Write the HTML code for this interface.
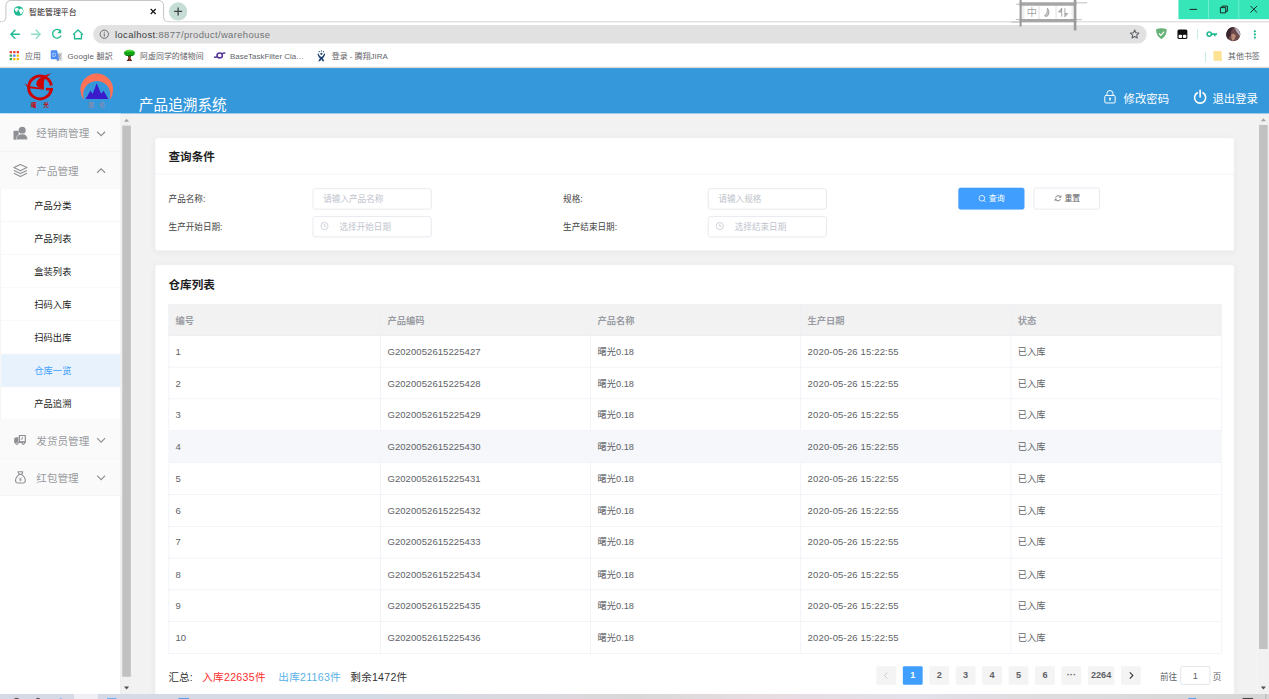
<!DOCTYPE html>
<html lang="zh-CN">
<head>
<meta charset="utf-8">
<title>智能管理平台</title>
<style>
html,body{margin:0;padding:0;width:1269px;height:699px;overflow:hidden;background:#fff}
body{font-family:"Liberation Sans","Noto Sans CJK SC",sans-serif;color:#333}
#root{position:absolute;left:0;top:0;width:1920px;height:1058px;transform:scale(0.6609375);transform-origin:0 0;overflow:hidden;background:#fff}
#root *{box-sizing:border-box}
.abs{position:absolute}
.t{position:absolute;white-space:nowrap;line-height:1}
svg{position:absolute;overflow:visible}
/* chrome */
#tabstrip{left:0;top:0;width:1920px;height:34px;background:#fff}
#toolbar{left:0;top:34px;width:1920px;height:36px;background:#fff}
#bookmarks{left:0;top:70px;width:1920px;height:32px;background:#fff}
.bm{font-size:12px;color:#5f6368;top:79px;height:12px}
/* page */
#header{left:0;top:102.900px;width:1920px;height:69.100px;background:#3598db}
#sidebar{left:0;top:172px;width:183px;height:878px;background:linear-gradient(#f5f5f5,#f5f5f5) 0 0/2px 464px no-repeat #fff;border-right:1px solid #e6e6e6}
#sbscroll{left:183px;top:172px;width:17px;height:878px;background:#f1f1f1}
#main{left:200px;top:172px;width:1703px;height:878px;background:#f2f2f2}
#mscroll{left:1903px;top:172px;width:17px;height:878px;background:#f1f1f1}
#taskbar{left:0;top:1049.600px;width:1920px;height:10px;background:linear-gradient(to right,#d6d9e6 0%,#d5dbe4 30%,#dcd8de 45%,#d9d8d8 50%,#e6dde2 60%,#e3e1ea 72%,#dfdde0 80%,#d6d6d6 100%)}
.card{position:absolute;background:#fff;border-radius:4px;border:1px solid #ebeef5;box-shadow:0 2px 10px 0 rgba(0,0,0,.04)}
.thumb{position:absolute;left:2px;width:13px;background:#c1c1c1}
/* sidebar */
.m1{position:absolute;left:0;width:182px;height:57px;background:#fafafa;border-bottom:1px solid #f0f0f0}
.m1 .t{left:55px;top:20px;font-size:16px;color:#999a9f}
.m2{position:absolute;left:2px;width:180px;height:50px;background:#fff;border-bottom:1px solid #f2f2f2}
.m2 .t{left:50px;top:18px;font-size:14px;color:#1a1a1a}
.m2.on{background:#e8f2fc}
.m2.on .t{color:#409eff}
/* form */
.lbl{font-size:13px;color:#444}
.inp{position:absolute;width:180px;height:32px;border:1px solid #dcdfe6;border-radius:4px;background:#fff}
.inp .t{font-size:13px;color:#c0c4cc;top:9px}
.btn{position:absolute;width:100px;height:33px;border-radius:3px;border:1px solid #dcdfe6;background:#fff}
.td{font-size:14px;color:#606266}
.tn{font-size:14.400px}
/* table */
.th{position:absolute;top:460px;height:48px;background:#f2f2f2;border-right:1px solid #ebeef5;border-bottom:1px solid #ebeef5}
.th .t{left:10px;top:17px;font-size:14px;font-weight:bold;color:#909399}
.tr{position:absolute;left:255px;width:1592px;height:48px;border-bottom:1px solid #ebeef5;border-left:1px solid #ebeef5;background:#fff}
.tr.hv{background:#f5f7fa}
.tr .t{top:17px;font-size:14px;color:#606266}
.tr i{position:absolute;top:0;width:1px;height:48px;background:#ebeef5}
.pg{position:absolute;top:1008.300px;height:28px;width:30px;background:#f4f4f5;border-radius:2px;font-size:13.800px;font-weight:bold;color:#606266;text-align:center;line-height:28px}
.pg.on{background:#409eff;color:#fff}
</style>
</head>
<body>
<div id="root">
<!-- ===== browser chrome ===== -->
<div id="tabstrip" class="abs">
  <svg width="1920" height="34" style="left:0;top:0">
    <path d="M0,33.300 L1920,33.300" stroke="#c4c4c4" stroke-width="1.600" fill="none"/>
    <path d="M0,33.5 Q9,33.5 9,25 L9,9 Q9,0.7 17,0.7 L239,0.7 Q247.5,0.7 247.5,9 L247.5,25 Q247.5,33.5 256,33.5" stroke="#b9b9b9" stroke-width="1.3" fill="#fff"/>
    <path d="M1,34 L255,34" stroke="#fff" stroke-width="2"/>
    <!-- favicon -->
    <circle cx="28.200" cy="16.600" r="7.300" fill="#1fb992"/>
    <path transform="translate(0,-0.900)" d="M24.2,12.6 l3,0.6 l1.6,2.2 l-2.4,1.4 l-0.4,2.6 l-2.4,-1.4 l-1.4,-2.6 z M30,14 l3.6,0.2 l1.4,3 l-1.8,4 l-2.6,1 l-0.6,-3.2 l-1.8,-1.6 l1,-1.8 z" fill="#fff"/>
    <!-- close -->
    <path d="M228,13.6 L235.6,21.2 M235.6,13.6 L228,21.2" stroke="#1a1a1a" stroke-width="1.9" fill="none"/>
    <!-- new tab -->
    <circle cx="269.5" cy="17.3" r="13.8" fill="#c6ddd6"/>
    <path d="M263.5,17.3 L275.5,17.3 M269.5,11.3 L269.5,23.3" stroke="#3c4043" stroke-width="1.9" fill="none"/>
  </svg>
  <div class="t" style="left:44px;top:12px;font-size:12px;color:#1f2023">智能管理平台</div>
  <!-- window buttons -->
  <div class="abs" style="left:1783px;top:0;width:137px;height:28.5px;background:#36e6b9"></div>
  <svg width="137" height="29" style="left:1783px;top:0">
    <path d="M45.5,0 L45.5,28.5 M91.2,0 L91.2,28.5" stroke="#7ff0d3" stroke-width="1.2"/>
    <path d="M17,14.2 L28,14.2" stroke="#1a1a1a" stroke-width="1.5"/>
    <path d="M63.5,11.5 h8 v8 h-8 z M66,11.5 v-2.3 h8 v8 h-2.5" stroke="#1a1a1a" stroke-width="1.4" fill="none"/>
    <path d="M109,9 L119,19 M119,9 L109,19" stroke="#1a1a1a" stroke-width="1.4"/>
  </svg>
</div>
<div id="toolbar" class="abs">
  <div class="abs" style="left:141px;top:4px;width:1594px;height:28px;border-radius:14px;background:#e1e1e1"></div>
  <svg width="1920" height="36" style="left:0;top:0">
    <!-- back -->
    <path d="M30,17.800 L16.700,17.800 M23.200,11 L16.400,17.800 L23.200,24.600" stroke="#1fb992" stroke-width="2" fill="none"/>
    <!-- forward -->
    <path d="M47,17.8 L60.5,17.8 M54,11 L60.8,17.8 L54,24.6" stroke="#8fdcc8" stroke-width="2" fill="none"/>
    <!-- reload -->
    <path d="M91.6,13.2 A6.6,6.6 0 1 0 92.4,19.6" stroke="#1fb992" stroke-width="2" fill="none"/>
    <path d="M92.6,10.4 L92.6,16.4 L86.6,16.4 z" fill="#1fb992"/>
    <!-- home -->
    <path d="M110.5,18.4 L118,11.4 L125.5,18.4 M112.8,17.6 L112.8,24.6 L123.2,24.6 L123.2,17.6" stroke="#1fb992" stroke-width="2" fill="none" stroke-linejoin="miter"/>
    <!-- info -->
    <circle cx="157.8" cy="17.8" r="6.3" stroke="#5f6368" stroke-width="1.4" fill="none"/>
    <path d="M157.8,16.8 L157.8,21.4 M157.8,14 L157.8,15.4" stroke="#5f6368" stroke-width="1.5"/>
    <!-- star -->
    <path transform="translate(171.700,1.800) scale(0.900)" d="M1716.7,10.6 l2.1,4.6 l5,0.6 l-3.7,3.4 l1,5 l-4.4,-2.5 l-4.4,2.5 l1,-5 l-3.7,-3.4 l5,-0.6 z" stroke="#5f6368" stroke-width="1.800" fill="none" stroke-linejoin="round"/>
    <!-- shield -->
    <path d="M1757.2,8.6 q4.4,0 8,1.6 q0.6,9.6 -8,15 q-8.6,-5.4 -8,-15 q3.6,-1.6 8,-1.6 z" fill="#67b279"/>
    <path d="M1753.4,16.6 l3,3 l5,-5.6" stroke="#fff" stroke-width="1.7" fill="none"/>
    <!-- black ext -->
    <rect x="1781.5" y="10.5" width="15" height="14.6" rx="2.4" fill="#111"/>
    <rect x="1783.2" y="18.4" width="5.3" height="5" rx="1.6" fill="#fff"/>
    <rect x="1789.7" y="18.4" width="5.3" height="5" rx="1.6" fill="#fff"/>
    <!-- divider -->
    <path d="M1811.8,10.6 L1811.8,25" stroke="#bfeee0" stroke-width="1.4"/>
    <!-- key -->
    <circle cx="1829.600" cy="17.600" r="3.200" stroke="#1fb992" stroke-width="2.400" fill="none"/>
    <path d="M1833,17.600 L1841.400,17.600 M1838,17.600 L1838,21" stroke="#1fb992" stroke-width="2.400" fill="none"/>
    <!-- avatar -->
    <circle cx="1866" cy="18" r="10.6" fill="#6d4a4a"/>
    <path d="M1856.2,14 a10.6,10.6 0 0 1 12,-6.4 q-7,3 -6,11 q-3,3 -4,7 a10.6,10.6 0 0 1 -2,-11.6 z" fill="#3a2630"/>
    <path d="M1868,8 a10.6,10.6 0 0 1 8,13 q-5,-6 -8,-13 z" fill="#b9b4c4"/>
    <path d="M1863,18 q4,-3 7,2 q-1,6 -5,8 q-3,-4 -2,-10 z" fill="#b98a78"/>
    <!-- dots -->
    <circle cx="1898.600" cy="13.300" r="1.700" fill="#1fb992"/>
    <circle cx="1898.600" cy="18.100" r="1.700" fill="#1fb992"/>
    <circle cx="1898.600" cy="22.900" r="1.700" fill="#1fb992"/>
  </svg>
  <div class="t" style="left:174px;top:10.5px;font-size:14.300px;color:#707376;letter-spacing:0.540px"><span style="color:#3a3c40">localhost</span>:8877/product/warehouse</div>
</div>
  <!-- IME widget -->
  <svg width="140" height="50" style="left:1520px;top:0">
    <rect x="24" y="6" width="83" height="25.500" fill="#fff"/>
    <rect x="24" y="8" width="6" height="21" fill="#e9e9e9" opacity=".7"/>
    <rect x="101" y="8" width="6" height="21" fill="#e9e9e9" opacity=".7"/>
    <rect x="50.500" y="9" width="3" height="20" fill="#f0f0f0"/>
    <rect x="76.500" y="9" width="3" height="20" fill="#f0f0f0"/>
    <path d="M22.500,6 H108.500" stroke="#a6a6a6" stroke-width="5.200"/>
    <path d="M22.500,31.200 H108.500" stroke="#a6a6a6" stroke-width="5.200"/>
    <path d="M24.200,0 V40" stroke="#9c9c9c" stroke-width="3.200"/>
    <path d="M106.600,0 V46" stroke="#9c9c9c" stroke-width="4"/>
    <path d="M108,4.300 H125 M108,29.700 H117 M17,6.500 H23 M17,29.500 H23 M10,33.500 H23" stroke="#b4b4b4" stroke-width="1.300"/>
    <path d="M65,12.400 Q69.400,18.400 65.400,24 Q62.600,25.600 60.200,24 Q65.400,21 65,12.400 z" fill="#c9c9c9" stroke="#8a8a8a" stroke-width="1"/>
    <path d="M86.400,25.300 V12.400 L81.700,18.100 H86.400 M91.200,12.400 V25.300 L95.500,20.500 H91.200" fill="#c9c9c9" stroke="#8a8a8a" stroke-width="1.100"/>
  </svg>
  <div class="t" style="left:1553.500px;top:11px;font-size:15.500px;color:#7a7a7a;font-weight:300">中</div>
<div id="bookmarks" class="abs"></div>
<svg width="1920" height="32" style="left:0;top:70px">
  <!-- apps -->
  <g>
    <rect x="14.6" y="7" width="3.6" height="3.6" rx=".6" fill="#ea4335"/><rect x="19.9" y="7" width="3.6" height="3.6" rx=".6" fill="#ea4335"/><rect x="25.2" y="7" width="3.6" height="3.6" rx=".6" fill="#ea4335"/>
    <rect x="14.6" y="12.3" width="3.6" height="3.6" rx=".6" fill="#34a853"/><rect x="19.9" y="12.3" width="3.6" height="3.6" rx=".6" fill="#4285f4"/><rect x="25.2" y="12.3" width="3.6" height="3.6" rx=".6" fill="#fbbc05"/>
    <rect x="14.6" y="17.6" width="3.6" height="3.6" rx=".6" fill="#34a853"/><rect x="19.9" y="17.6" width="3.6" height="3.6" rx=".6" fill="#fbbc05"/><rect x="25.2" y="17.6" width="3.6" height="3.6" rx=".6" fill="#fbbc05"/>
  </g>
  <!-- translate -->
  <rect x="84.5" y="9.5" width="9.5" height="12.5" rx="1" fill="#d5d8dc"/>
  <path d="M87.4,13 l4.6,0 M89.7,12 l0,1 M88,13 q1,4 4,6 M91.6,13 q-1,4 -4,6" stroke="#8a8f96" stroke-width="0.9" fill="none"/>
  <path d="M78,6 h8.4 l2.8,13.6 h-11.2 q-1.2,0 -1.2,-1.2 v-11.2 q0,-1.2 1.2,-1.2 z" fill="#4a8bf5"/>
  <path d="M86.4,19.6 l2.8,0 l-1.6,3.4 z" fill="#2d5fc4"/>
  <path d="M80,10.4 h3 q2.6,2.4 0,5 h-3 z" stroke="#dfe9ff" stroke-width="1" fill="none"/>
  <!-- tree -->
  <path d="M193.400,13.600 L198.600,13.600 L197.400,18 L199.800,22.300 L191.800,22.300 L194.400,18 z" fill="#4a1408"/>
  <path d="M195.200,14 L197,14 L196.600,19 L197.600,22.300 L194.400,22.300 L195.400,19 z" fill="#a33a1c"/>
  <ellipse cx="195.900" cy="10.100" rx="8.400" ry="4.900" fill="#13a313"/>
  <path d="M188.400,9 q2.600,-3.600 7.500,-3.700 q5,0 7.300,3.400 q-3.600,-1.400 -7.300,-0.600 q-4,-0.800 -7.500,0.900 z" fill="#52e03c"/>
  <path d="M188.200,12 q3.600,2.200 7.700,1.200 q4.200,1 7.800,-1.200 q-1.400,3 -7.800,3 q-6.200,0 -7.700,-3 z" fill="#096b0d"/>
  <!-- purple -->
  <ellipse cx="332.400" cy="13.800" rx="4" ry="3.700" stroke="#5a3b9a" stroke-width="2.400" fill="none"/>
  <path d="M324.600,16.400 q2.600,0.800 4.400,-1.400 M336,11.600 q2,-2 4,-1.400" stroke="#5a3b9a" stroke-width="2.200" fill="none" stroke-linecap="round"/>
  <!-- jira -->
  <g transform="translate(486.200,14.600) scale(0.840) translate(-486.200,-14.600)">
  <path d="M480.6,10 q2.2,5 5.6,6.6 q3.4,-1.600 5.6,-6.6 l1.400,1.6 q-1.800,5 -4.400,7.400 l3,5.400 l-3.400,0 l-2.200,-3.800 l-2.200,3.800 l-3.400,0 l3,-5.400 q-2.600,-2.400 -4.400,-7.400 z" fill="#1d4273"/>
  <circle cx="486.200" cy="10.800" r="2" fill="#1d4273"/>
  <circle cx="482.400" cy="7" r="1.100" fill="#1d4273"/><circle cx="486.200" cy="5.600" r="1.100" fill="#1d4273"/><circle cx="490" cy="7" r="1.100" fill="#1d4273"/>
  </g>
  <!-- right -->
  <path d="M1824,8.4 L1824,24" stroke="#bfeee0" stroke-width="1.4"/>
  <path d="M1837.4,7 h9.6 q1.4,0 1.400,1.400 v11.200 h-2 v2.200 h-9 q-1.400,0 -1.400,-1.400 v-12 q0,-1.400 1.400,-1.400 z" fill="#fde293"/>
  <path d="M1846.400,19.600 h2 v2.200 h-2 z" fill="#f9c846"/>
</svg>
<div class="t bm" style="left:38px">应用</div>
<div class="t bm" style="left:102px;letter-spacing:0.300px">Google 翻訳</div>
<div class="t bm" style="left:212px">阿虚同学的储物间</div>
<div class="t bm" style="left:348px">BaseTaskFilter Cla…</div>
<div class="t bm" style="left:502px">登录 - 腾翔JIRA</div>
<div class="t bm" style="left:1858px;margin-top:0.300px">其他书签</div>
<!-- ===== app header ===== -->
<div class="abs" style="left:0;top:101.300px;width:1920px;height:1.700px;background:#dcd8d4"></div>
<div id="header" class="abs">
  <svg width="200" height="69" style="left:0;top:0">
    <defs><clipPath id="cres"><rect x="110" y="0" width="80" height="46.300"/></clipPath></defs>
    <!-- logo 1 : 曙光 -->
    <g fill="#cc0303">
      <path d="M77.730,31.700 A17.300,17.300 0 1 1 77.640,26.300" stroke="#cc0303" stroke-width="4.400" fill="none"/>
      <rect x="69.600" y="30" width="10.600" height="3.800"/>
      <path d="M77.800,8.100 Q72,9.500 69.200,10.500 Q64,12.500 61.500,14.300 Q55,19 54.900,23.800 Q55,27.500 58.700,29.500 L66.300,32.900 L66.300,23.800 Q66.300,19 68.200,15.700 Q70,13.500 72,12.400 Q74.500,10 77.800,8.100 z"/>
      <path d="M36.800,22.800 Q41,26 45.300,27.600 L58.700,29.500 L66.300,32.900 L45.300,30.500 Q40,28.500 36.800,22.800 z"/>
    </g>
    <!-- logo 2 : 昆仑 -->
    <path clip-path="url(#cres)" fill-rule="evenodd" fill="#ff7256" d="M121.700,32.900 a24.700,24.700 0 1 0 49.400,0 a24.700,24.700 0 1 0 -49.400,0 z M126,39.800 a20.400,20.400 0 1 0 40.800,0 a20.400,20.400 0 1 0 -40.800,0 z"/>
    <path d="M129.600,46.900 L136.700,34.300 L140.300,38.700 L146.300,22.800 L153,38.700 L156.700,34.300 L163.900,46.900 z" fill="#3a1ccc"/>
  </svg>
  <div class="t" style="left:46.700px;top:51.700px;font-size:8.600px;font-weight:bold;color:#c40a0a;letter-spacing:10.200px">曙光</div>
  <div class="t" style="left:133.600px;top:51.900px;font-size:8.600px;color:#f2775f;letter-spacing:8.100px;font-weight:300">昆仑</div>
  <div class="t" style="left:210px;top:46.100px;font-size:22.200px;color:#fff">产品追溯系统</div>
  <!-- right actions -->
  <svg width="30" height="30" style="left:1668px;top:31px">
    <rect x="3.600" y="10.400" width="15.600" height="11.400" rx="1.600" stroke="#fff" stroke-width="1.500" fill="none"/>
    <path d="M6.800,10.400 V7.600 A4.600,4.600 0 0 1 16,7.600 V10.400" stroke="#fff" stroke-width="1.500" fill="none"/>
    <path d="M11.400,14.400 V18.400" stroke="#fff" stroke-width="1.600"/>
    <circle cx="11.400" cy="15" r="1.500" fill="#fff"/>
  </svg>
  <div class="t" style="left:1700px;top:39.200px;font-size:17.200px;color:#fff">修改密码</div>
  <svg width="30" height="30" style="left:1804px;top:31px">
    <path d="M7.600,6.400 A8.400,8.400 0 1 0 16,6.400" stroke="#fff" stroke-width="2.400" fill="none" stroke-linecap="round"/>
    <path d="M11.800,2.600 V12.600" stroke="#fff" stroke-width="2.400" stroke-linecap="round"/>
  </svg>
  <div class="t" style="left:1834.500px;top:39.200px;font-size:17.200px;color:#fff">退出登录</div>
</div>
<!-- ===== sidebar ===== -->
<div id="sidebar" class="abs">
  <div class="m1" style="top:0;height:58px"><div class="t" style="top:23px">经销商管理</div></div>
  <div class="m1" style="top:58px;height:56px;border-bottom:0"><div class="t" style="top:80.400px;margin-top:-58px">产品管理</div></div>
  <div class="m2" style="top:114px"><div class="t">产品分类</div></div>
  <div class="m2" style="top:164px"><div class="t">产品列表</div></div>
  <div class="m2" style="top:214px"><div class="t">盒装列表</div></div>
  <div class="m2" style="top:264px"><div class="t">扫码入库</div></div>
  <div class="m2" style="top:314px"><div class="t">扫码出库</div></div>
  <div class="m2 on" style="top:364px"><div class="t">仓库一览</div></div>
  <div class="m2" style="top:414px"><div class="t">产品追溯</div></div>
  <div class="m1" style="top:464px;height:58px"><div class="t" style="top:23.500px">发货员管理</div></div>
  <div class="m1" style="top:522px;height:56px"><div class="t" style="top:22px">红包管理</div></div>
  <svg width="183" height="600" style="left:0;top:0">
    <!-- users icon -->
    <g fill="#8f9095">
      <rect x="20.400" y="26" width="8" height="13.300" rx="0.800"/>
      <circle cx="33.600" cy="25" r="5.300"/>
      <path d="M24.600,39.300 q0,-8.600 9,-8.600 q8.200,0 8.200,8.600 z" stroke="#fafafa" stroke-width="0.800"/>
    </g>
    <!-- layers icon -->
    <g stroke="#8f9095" stroke-width="1.700" fill="none" stroke-linejoin="round">
      <path d="M30.900,76.800 l9.800,4.700 l-9.800,4.700 l-9.800,-4.700 z"/>
      <path d="M21.100,85.900 l9.800,4.700 l9.800,-4.700"/>
      <path d="M21.100,90.300 l9.800,4.700 l9.800,-4.700"/>
    </g>
    <!-- truck icon -->
    <g fill="#8f9095">
      <path d="M28.400,486 h9.400 q1.400,0 1.400,1.400 v9.600 q0,1.400 -1.400,1.400 h-9.400 z"/>
      <path d="M21.400,492.600 q0,-3 3,-3 h3.400 v8.800 h-6.400 z"/>
      <circle cx="25.600" cy="498.400" r="2.700"/><circle cx="35.200" cy="498.400" r="2.700"/>
    </g>
    <rect x="30.200" y="487.800" width="7.200" height="7.600" fill="#fafafa"/>
    <path d="M33.800,489.400 v3 h-2.400" stroke="#8f9095" stroke-width="1.300" fill="none"/>
    <circle cx="25.600" cy="498.400" r="1" fill="#fafafa"/><circle cx="35.200" cy="498.400" r="1" fill="#fafafa"/>
    <!-- money bag icon -->
    <g stroke="#8f9095" stroke-width="1.700" fill="none" stroke-linejoin="round">
      <path d="M27.400,541.800 h7 l-1.400,4 h-4.200 z"/>
      <path d="M28.600,546 q-5.800,5 -5,10.200 q0.600,2.600 3.400,2.600 h7.800 q2.800,0 3.400,-2.600 q0.800,-5.200 -5,-10.200"/>
    </g>
    <path d="M29,550.400 l1.900,2.200 l1.900,-2.200 M30.900,552.600 v3.600 M29,554 h3.800" stroke="#8f9095" stroke-width="1.200" fill="none"/>
    <!-- arrows -->
    <g stroke="#8f9095" stroke-width="1.800" fill="none">
      <path d="M147,27.400 l6,6 l6,-6"/>
      <path d="M147,89.400 l6,-6 l6,6"/>
      <path d="M147,491 l6,6 l6,-6"/>
      <path d="M147,547.600 l6,6 l6,-6"/>
    </g>
  </svg>
</div>
<div id="sbscroll" class="abs">
  <div class="thumb" style="top:17.500px;height:834px"></div>
  <svg width="17" height="876" style="left:0;top:0">
    <path d="M4.600,12.100 L8.500,7.500 L12.400,12.100 z" fill="#a3a3a3"/>
    <path d="M4.600,866.600 L8.500,871.200 L12.400,866.600 z" fill="#505050"/>
  </svg>
</div>
<!-- ===== main content ===== -->
<div id="main" class="abs"></div>
<div id="mscroll" class="abs">
  <div class="thumb" style="top:17px;height:793px"></div>
  <svg width="17" height="876" style="left:0;top:0"><path d="M4.600,11.400 L8.500,6.800 L12.400,11.400 z" fill="#a3a3a3"/><path d="M4.600,866.600 L8.500,871.200 L12.400,866.600 z" fill="#505050"/></svg>
</div>
<div class="card" style="left:233.500px;top:207.500px;width:1634.700px;height:172.500px"></div>
<div class="t" style="left:255px;top:229px;font-size:17.500px;font-weight:bold;color:#1f1f1f">查询条件</div>
<div class="abs" style="left:234px;top:263px;width:1634px;height:1px;background:#ebeef5"></div>
<div class="t lbl" style="left:255px;top:295px">产品名称:</div>
<div class="t lbl" style="left:255px;top:336.500px">生产开始日期:</div>
<div class="t lbl" style="left:852px;top:295px">规格:</div>
<div class="t lbl" style="left:852px;top:336.500px">生产结束日期:</div>
<div class="inp" style="left:473px;top:285px"><div class="t" style="left:15px">请输入产品名称</div></div>
<div class="inp" style="left:1071px;top:285px"><div class="t" style="left:15px">请输入规格</div></div>
<div class="inp" style="left:473px;top:327px"><svg width="14" height="14" style="left:9.500px;top:7px"><circle cx="7" cy="7" r="5.400" stroke="#c0c4cc" stroke-width="1.100" fill="none"/><path d="M7,3.800 V7.400 H9.800" stroke="#c0c4cc" stroke-width="1.100" fill="none"/></svg><div class="t" style="left:39.600px">选择开始日期</div></div>
<div class="inp" style="left:1071px;top:327px"><svg width="14" height="14" style="left:9.500px;top:7px"><circle cx="7" cy="7" r="5.400" stroke="#c0c4cc" stroke-width="1.100" fill="none"/><path d="M7,3.800 V7.400 H9.800" stroke="#c0c4cc" stroke-width="1.100" fill="none"/></svg><div class="t" style="left:39.600px">选择结束日期</div></div>
<div class="btn" style="left:1450px;top:283.500px;background:#409eff;border-color:#409eff"><svg width="14" height="14" style="left:29px;top:9px"><circle cx="5.600" cy="6" r="4.300" stroke="#fff" stroke-width="1.200" fill="none"/><path d="M8.700,9.200 L11.200,11.700" stroke="#fff" stroke-width="1.200"/></svg><div class="t" style="left:45px;top:9px;font-size:12px;color:#fff">查询</div></div>
<div class="btn" style="left:1564px;top:283.500px"><svg width="14" height="14" style="left:29.500px;top:9.500px"><path d="M9.800,4.200 A4.300,4.300 0 0 0 2,4.900 M1.800,7.600 A4.300,4.300 0 0 0 9.600,7.200" stroke="#606266" stroke-width="1.200" fill="none"/><path d="M10.200,1.600 V4.500 H7.300 M1.400,10.200 V7.300 H4.300" stroke="#606266" stroke-width="1" fill="none"/></svg><div class="t" style="left:45.500px;top:9px;font-size:12px;color:#606266">重置</div></div>
<div class="card" style="left:233.500px;top:399.800px;width:1634.700px;height:665px"></div>
<div class="t" style="left:255px;top:424px;font-size:17.500px;font-weight:bold;color:#1f1f1f">仓库列表</div>
<div class="abs" style="left:255px;top:460px;width:1593px;height:48.100px;background:#f2f2f2;border-bottom:1px solid #e9ecf2;border-top:1px solid #ebeef5"></div>
<div class="t" style="left:265.5px;top:478.400px;font-size:14px;font-weight:bold;color:#9a9da3">编号</div>
<div class="t" style="left:586.2px;top:478.400px;font-size:14px;font-weight:bold;color:#9a9da3">产品编码</div>
<div class="t" style="left:904.0px;top:478.400px;font-size:14px;font-weight:bold;color:#9a9da3">产品名称</div>
<div class="t" style="left:1221.9px;top:478.400px;font-size:14px;font-weight:bold;color:#9a9da3">生产日期</div>
<div class="t" style="left:1539.8px;top:478.400px;font-size:14px;font-weight:bold;color:#9a9da3">状态</div>
<div class="abs" style="left:575.2px;top:460px;width:1px;height:529px;background:#ebeef5"></div>
<div class="abs" style="left:893.0px;top:460px;width:1px;height:529px;background:#ebeef5"></div>
<div class="abs" style="left:1210.9px;top:460px;width:1px;height:529px;background:#ebeef5"></div>
<div class="abs" style="left:1528.8px;top:460px;width:1px;height:529px;background:#ebeef5"></div>
<div class="abs" style="left:255px;top:460px;width:1px;height:529px;background:#ebeef5"></div>
<div class="abs" style="left:1847.500px;top:460px;width:1px;height:529px;background:#ebeef5"></div>
<div class="abs" style="left:255px;top:555.19px;width:1593px;height:1px;background:#ebeef5"></div>
<div class="t td tn" style="left:265.5px;top:524.90px;">1</div>
<div class="t td tn" style="left:586.2px;top:524.90px;letter-spacing:0.1px;">G2020052615225427</div>
<div class="t td" style="left:904.0px;top:524.90px;">曙光0.18</div>
<div class="t td tn" style="left:1221.9px;top:524.90px;letter-spacing:0.23px;">2020-05-26 15:22:55</div>
<div class="t td" style="left:1539.8px;top:524.90px;">已入库</div>
<div class="abs" style="left:255px;top:603.28px;width:1593px;height:1px;background:#ebeef5"></div>
<div class="t td tn" style="left:265.5px;top:572.99px;">2</div>
<div class="t td tn" style="left:586.2px;top:572.99px;letter-spacing:0.1px;">G2020052615225428</div>
<div class="t td" style="left:904.0px;top:572.99px;">曙光0.18</div>
<div class="t td tn" style="left:1221.9px;top:572.99px;letter-spacing:0.23px;">2020-05-26 15:22:55</div>
<div class="t td" style="left:1539.8px;top:572.99px;">已入库</div>
<div class="abs" style="left:255px;top:651.37px;width:1593px;height:1px;background:#ebeef5"></div>
<div class="t td tn" style="left:265.5px;top:621.08px;">3</div>
<div class="t td tn" style="left:586.2px;top:621.08px;letter-spacing:0.1px;">G2020052615225429</div>
<div class="t td" style="left:904.0px;top:621.08px;">曙光0.18</div>
<div class="t td tn" style="left:1221.9px;top:621.08px;letter-spacing:0.23px;">2020-05-26 15:22:55</div>
<div class="t td" style="left:1539.8px;top:621.08px;">已入库</div>
<div class="abs" style="left:255px;top:652.37px;width:1592px;height:47.1px;background:#f5f7fa"></div>
<div class="abs" style="left:255px;top:699.46px;width:1593px;height:1px;background:#ebeef5"></div>
<div class="t td tn" style="left:265.5px;top:669.17px;">4</div>
<div class="t td tn" style="left:586.2px;top:669.17px;letter-spacing:0.1px;">G2020052615225430</div>
<div class="t td" style="left:904.0px;top:669.17px;">曙光0.18</div>
<div class="t td tn" style="left:1221.9px;top:669.17px;letter-spacing:0.23px;">2020-05-26 15:22:55</div>
<div class="t td" style="left:1539.8px;top:669.17px;">已入库</div>
<div class="abs" style="left:255px;top:747.55px;width:1593px;height:1px;background:#ebeef5"></div>
<div class="t td tn" style="left:265.5px;top:717.26px;">5</div>
<div class="t td tn" style="left:586.2px;top:717.26px;letter-spacing:0.1px;">G2020052615225431</div>
<div class="t td" style="left:904.0px;top:717.26px;">曙光0.18</div>
<div class="t td tn" style="left:1221.9px;top:717.26px;letter-spacing:0.23px;">2020-05-26 15:22:55</div>
<div class="t td" style="left:1539.8px;top:717.26px;">已入库</div>
<div class="abs" style="left:255px;top:795.64px;width:1593px;height:1px;background:#ebeef5"></div>
<div class="t td tn" style="left:265.5px;top:765.35px;">6</div>
<div class="t td tn" style="left:586.2px;top:765.35px;letter-spacing:0.1px;">G2020052615225432</div>
<div class="t td" style="left:904.0px;top:765.35px;">曙光0.18</div>
<div class="t td tn" style="left:1221.9px;top:765.35px;letter-spacing:0.23px;">2020-05-26 15:22:55</div>
<div class="t td" style="left:1539.8px;top:765.35px;">已入库</div>
<div class="abs" style="left:255px;top:843.73px;width:1593px;height:1px;background:#ebeef5"></div>
<div class="t td tn" style="left:265.5px;top:813.44px;">7</div>
<div class="t td tn" style="left:586.2px;top:813.44px;letter-spacing:0.1px;">G2020052615225433</div>
<div class="t td" style="left:904.0px;top:813.44px;">曙光0.18</div>
<div class="t td tn" style="left:1221.9px;top:813.44px;letter-spacing:0.23px;">2020-05-26 15:22:55</div>
<div class="t td" style="left:1539.8px;top:813.44px;">已入库</div>
<div class="abs" style="left:255px;top:891.82px;width:1593px;height:1px;background:#ebeef5"></div>
<div class="t td tn" style="left:265.5px;top:861.53px;">8</div>
<div class="t td tn" style="left:586.2px;top:861.53px;letter-spacing:0.1px;">G2020052615225434</div>
<div class="t td" style="left:904.0px;top:861.53px;">曙光0.18</div>
<div class="t td tn" style="left:1221.9px;top:861.53px;letter-spacing:0.23px;">2020-05-26 15:22:55</div>
<div class="t td" style="left:1539.8px;top:861.53px;">已入库</div>
<div class="abs" style="left:255px;top:939.91px;width:1593px;height:1px;background:#ebeef5"></div>
<div class="t td tn" style="left:265.5px;top:909.62px;">9</div>
<div class="t td tn" style="left:586.2px;top:909.62px;letter-spacing:0.1px;">G2020052615225435</div>
<div class="t td" style="left:904.0px;top:909.62px;">曙光0.18</div>
<div class="t td tn" style="left:1221.9px;top:909.62px;letter-spacing:0.23px;">2020-05-26 15:22:55</div>
<div class="t td" style="left:1539.8px;top:909.62px;">已入库</div>
<div class="abs" style="left:255px;top:988.00px;width:1593px;height:1px;background:#ebeef5"></div>
<div class="t td tn" style="left:265.5px;top:957.71px;">10</div>
<div class="t td tn" style="left:586.2px;top:957.71px;letter-spacing:0.1px;">G2020052615225436</div>
<div class="t td" style="left:904.0px;top:957.71px;">曙光0.18</div>
<div class="t td tn" style="left:1221.9px;top:957.71px;letter-spacing:0.23px;">2020-05-26 15:22:55</div>
<div class="t td" style="left:1539.8px;top:957.71px;">已入库</div>
<div class="t" style="left:255px;top:1017px;font-size:16px;color:#333">汇总:</div>
<div class="t" style="left:306px;top:1017px;font-size:16px;color:#ff2d2d;letter-spacing:0.450px">入库22635件</div>
<div class="t" style="left:421px;top:1017px;font-size:16px;color:#5ab1e6;letter-spacing:0.450px">出库21163件</div>
<div class="t" style="left:530px;top:1017px;font-size:16px;color:#333;letter-spacing:0.400px">剩余1472件</div>
<div class="pg" style="left:1326px;color:#c0c4cc"><svg width="30" height="28" style="left:0;top:0"><path d="M16.600,9.400 L12,14 L16.600,18.600" stroke="#c0c4cc" stroke-width="1.300" fill="none"/></svg></div>
<div class="pg on" style="left:1366px">1</div>
<div class="pg" style="left:1406px">2</div>
<div class="pg" style="left:1446px">3</div>
<div class="pg" style="left:1486px">4</div>
<div class="pg" style="left:1526px">5</div>
<div class="pg" style="left:1566px">6</div>
<div class="pg" style="left:1606px">···</div>
<div class="pg" style="left:1646px;width:40px">2264</div>
<div class="pg" style="left:1696px"><svg width="30" height="28" style="left:0;top:0"><path d="M13.400,9.400 L18,14 L13.400,18.600" stroke="#303133" stroke-width="1.600" fill="none"/></svg></div>
<div class="t" style="left:1755px;top:1018px;font-size:13px;color:#606266">前往</div>
<div class="abs" style="left:1786px;top:1008.300px;width:45px;height:28px;border:1px solid #d4d8e0;border-radius:3px;background:#fff;text-align:center;font-size:14px;line-height:26px;color:#606266">1</div>
<div class="t" style="left:1835px;top:1018px;font-size:13px;color:#606266">页</div>
<div id="taskbar" class="abs"><div class="abs" style="left:112px;top:0;width:36px;height:10px;background:#efeff5"></div><div class="abs" style="left:162px;top:6px;width:14px;height:4px;background:#6ab0ee"></div><div class="abs" style="left:270px;top:6px;width:16px;height:4px;background:#5aa0ee"></div><div class="abs" style="left:22px;top:6.500px;width:6px;height:4px;background:#555"></div><div class="abs" style="left:55px;top:6.500px;width:5px;height:4px;background:#555"></div><div class="abs" style="left:90px;top:7px;width:4px;height:3px;background:#4a8df0"></div><div class="abs" style="left:1798px;top:6.500px;width:12px;height:4px;background:#5aa0ee"></div><div class="abs" style="left:1774px;top:8px;width:3px;height:2px;background:#555"></div><div class="abs" style="left:1914px;top:0;width:1.500px;height:10px;background:#bdbdbd"></div><div class="abs" style="left:1880px;top:6.500px;width:16px;height:4px;background:#444"></div></div>
</div>
</body>
</html>
